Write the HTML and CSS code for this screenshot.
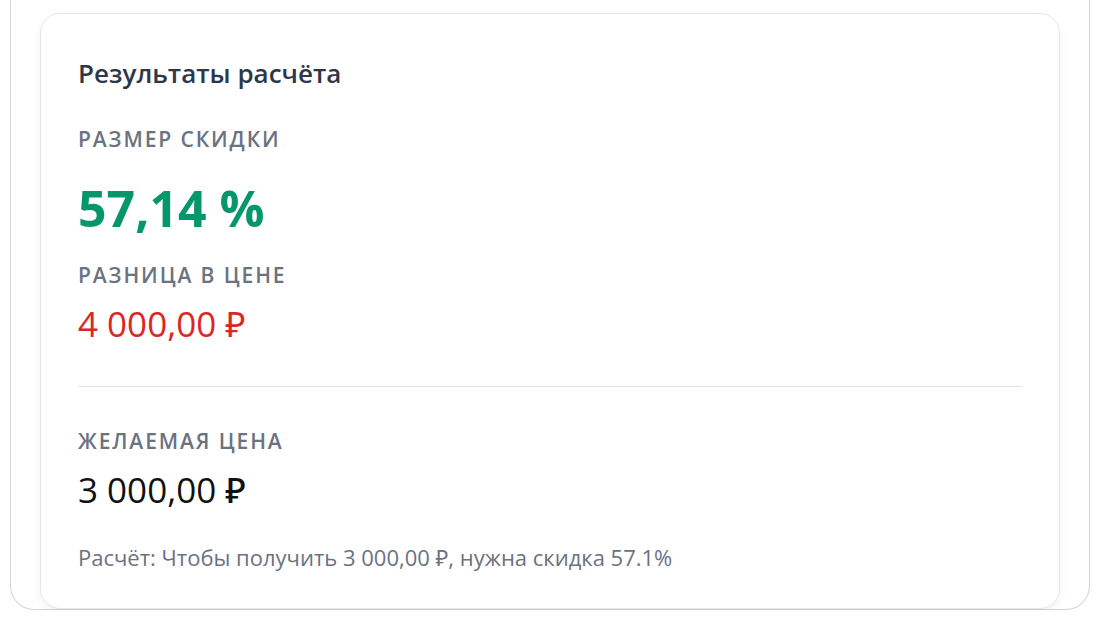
FILE: index.html
```html
<!DOCTYPE html>
<html lang="ru">
<head>
<meta charset="utf-8">
<title>Результаты расчёта</title>
<link rel="stylesheet" href="styles.css">
</head>
<body>
<div class="frame">
  <section class="card">
    <h2 class="card-title">Результаты расчёта</h2>
    <div class="label label-first">Размер скидки</div>
    <div class="percent">57,14 %</div>
    <div class="label label-second">Разница в цене</div>
    <div class="money money-red">4 000,00 ₽</div>
    <hr class="divider">
    <div class="label label-third">Желаемая цена</div>
    <div class="money money-dark">3 000,00 ₽</div>
    <p class="note">Расчёт: Чтобы получить 3 000,00 ₽, нужна скидка 57.1%</p>
  </section>
</div>
</body>
</html>
```
FILE: styles.css
```css
html, body {
  margin: 0;
  padding: 0;
  background: #ffffff;
}

body {
  font-family: "Open Sans", "Noto Sans", "DejaVu Sans", sans-serif;
  overflow: hidden;
}

.frame {
  margin: 0 10px;
  padding: 13px 29px 0;
  border: 1px solid #d4d4d8;
  border-top: 0;
  border-radius: 0 0 24px 24px;
}

.card {
  background: #ffffff;
  border: 1px solid #e5e7eb;
  border-radius: 20px;
  padding: 41px 37px 37px;
  box-shadow: 0 4px 10px rgba(0, 0, 0, 0.05);
}

.card-title {
  margin: 0;
  font-size: 26px;
  line-height: 36px;
  font-weight: 600;
  color: #2d3748;
}

.label {
  font-size: 21px;
  line-height: 28px;
  font-weight: 600;
  letter-spacing: 1.9px;
  text-transform: uppercase;
  color: #6b7280;
}

.label-first { margin-top: 34px; }
.label-second { margin-top: 23px; }
.label-third { margin-top: 40px; }

.percent {
  margin-top: 25px;
  font-size: 50px;
  line-height: 60px;
  font-weight: 700;
  color: #059669;
}

.money {
  margin-top: 13px;
  font-size: 35px;
  line-height: 44px;
  font-weight: 400;
}

.money-red { color: #dc2626; }
.money-dark { color: #111111; font-weight: 500; }

.divider {
  margin: 40px 0 0;
  border: 0;
  border-top: 1px solid #e5e7eb;
}

.note {
  margin: 31px 0 0;
  font-size: 22px;
  line-height: 28px;
  color: #6b7280;
}
```
